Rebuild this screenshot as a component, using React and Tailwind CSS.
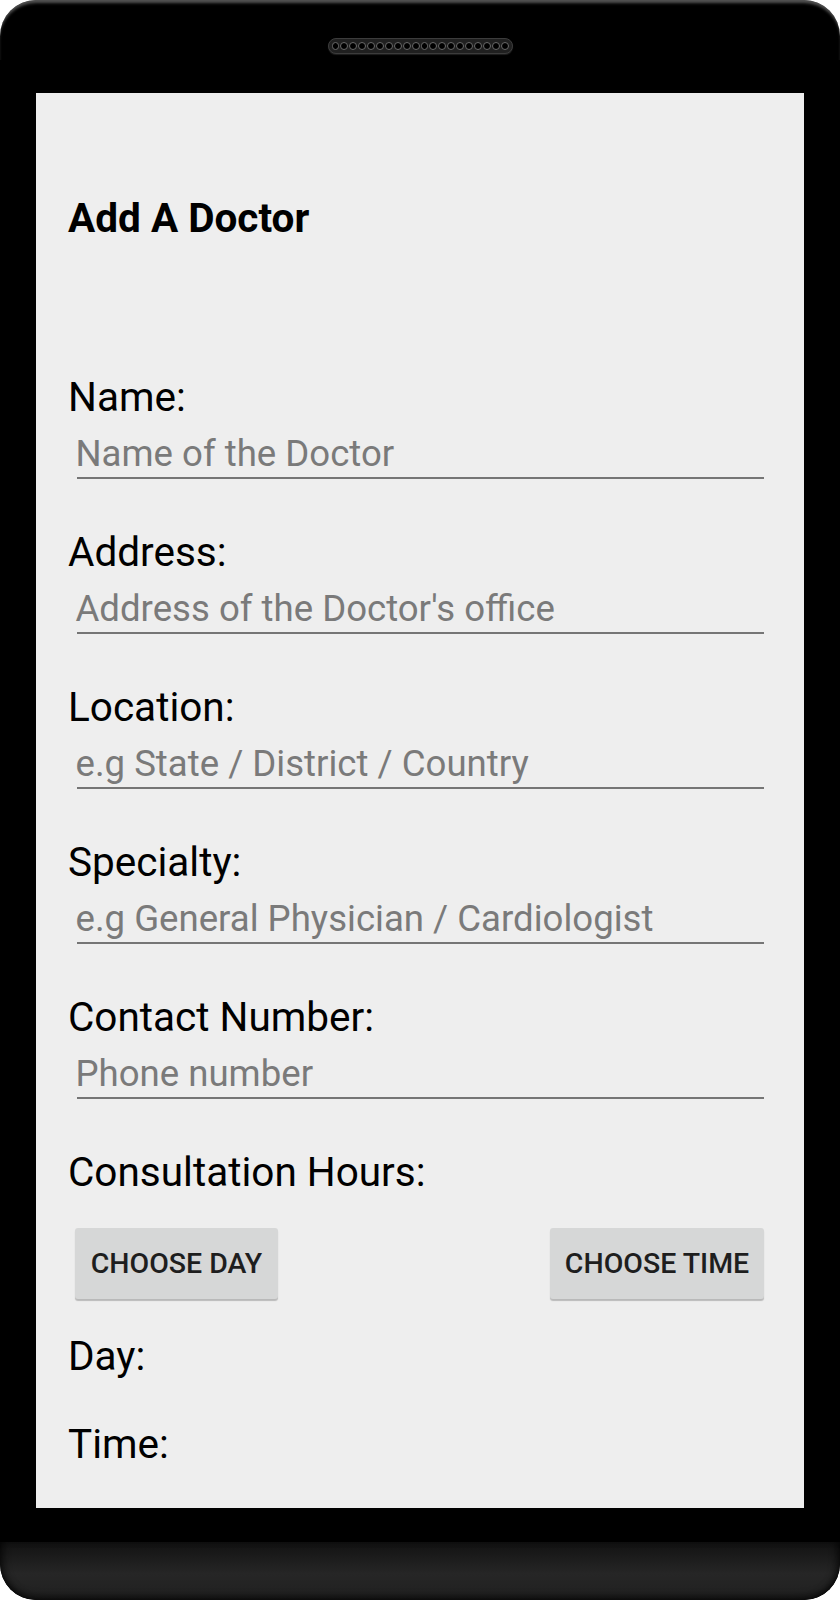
import React from "react";

const fields = [
  { label: "Name:", hint: "Name of the Doctor" },
  { label: "Address:", hint: "Address of the Doctor's office" },
  { label: "Location:", hint: "e.g State / District / Country" },
  { label: "Specialty:", hint: "e.g General Physician / Cardiologist" },
  { label: "Contact Number:", hint: "Phone number" },
];

function Speaker() {
  const holes = Array.from({ length: 20 });
  return (
    <div className="flex items-center gap-px px-[3px] h-[16px] w-[185px] rounded-full bg-[#202020] border border-[#3c3c3c] shadow-[0_1px_1px_rgba(255,255,255,0.12)]">
      {holes.map((_, i) => (
        <div
          key={i}
          className="w-[8px] h-[8px] rounded-full bg-black border border-[#6a6a6a]"
        />
      ))}
    </div>
  );
}

export default function App() {
  return (
    <div className="w-[840px] h-[1600px] bg-white" style={{ fontFamily: "Roboto, 'Noto Sans', sans-serif" }}>
      <div className="relative w-full h-full flex flex-col rounded-[36px] bg-black overflow-hidden">
        <div className="absolute inset-x-0 top-0 h-[60px] rounded-t-[36px] shadow-[inset_0_4px_3px_-1px_rgba(255,255,255,0.32)] pointer-events-none" />
        {/* top bezel */}
        <div className="h-[93px] flex justify-center pt-[38px]">
          <Speaker />
        </div>
        {/* screen */}
        <div className="mx-[36px] h-[1415px] bg-[#eeeeee] flex flex-col pl-[32px] pr-[40px] pt-[102px] text-black">
          <div className="text-[40.5px] leading-[47px] font-bold">Add A Doctor</div>
          <div className="mt-[132px] flex flex-col gap-[50px]">
            {fields.map((f) => (
              <div key={f.label} className="flex flex-col">
                <div className="text-[40.5px] leading-[47px]">{f.label}</div>
                <div className="ml-[9px] pt-[9px] border-b-2 border-[#757575]">
                  <div className="ml-[-1.5px] text-[36.6px] leading-[47px] text-[#7a7a7a]">{f.hint}</div>
                </div>
              </div>
            ))}
            <div className="text-[40.5px] leading-[47px]">Consultation Hours:</div>
          </div>
          <div className="mt-[32px] flex justify-between items-start pl-[7px]">
            <div className="w-[203px] h-[71px] rounded-[3px] bg-[#d6d7d7] shadow-[0_2px_1px_rgba(0,0,0,0.22)] flex items-center justify-center pt-[2px] text-[28.5px] font-medium text-[#1e1e1e]">
              CHOOSE DAY
            </div>
            <div className="w-[214px] h-[71px] rounded-[3px] bg-[#d6d7d7] shadow-[0_2px_1px_rgba(0,0,0,0.22)] flex items-center justify-center pt-[2px] text-[28.5px] font-medium text-[#1e1e1e]">
              CHOOSE TIME
            </div>
          </div>
          <div className="mt-[34px] text-[40.5px] leading-[47px]">Day:</div>
          <div className="mt-[41px] text-[40.5px] leading-[47px]">Time:</div>
        </div>
        {/* lower bezel */}
        <div className="h-[34px] bg-black" />
        <div className="flex-1 rounded-b-[36px] bg-[linear-gradient(to_bottom,#121212,#262626_55%,#202020)] shadow-[inset_6px_0_8px_-4px_rgba(0,0,0,0.7),inset_-6px_0_8px_-4px_rgba(0,0,0,0.7),inset_0_-6px_8px_-4px_rgba(0,0,0,0.7)]" />
      </div>
    </div>
  );
}
